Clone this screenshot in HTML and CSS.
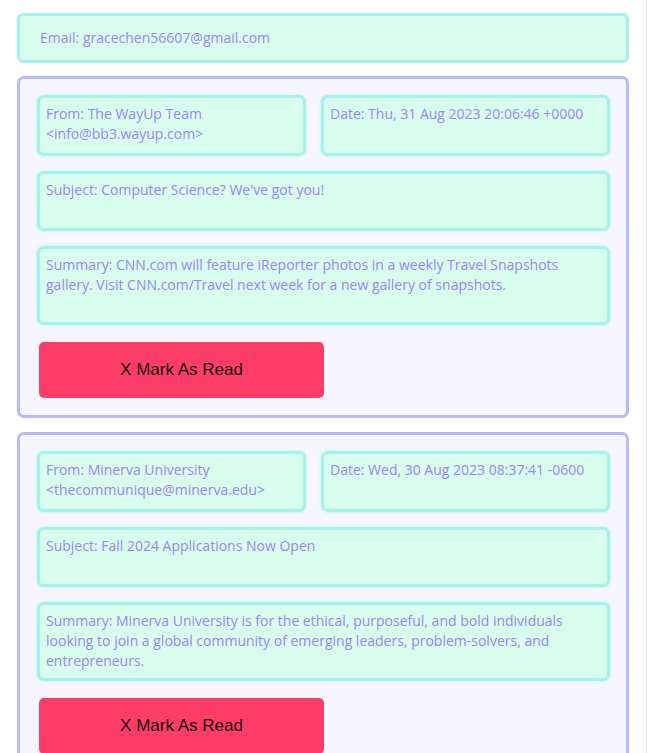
FILE: index.html
```html
<!DOCTYPE html>
<html>
<head>
<meta charset="utf-8">
<link rel="stylesheet" href="styles.css">
</head>
<body>
<div class="page">
  <div class="email-box">Email: gracechen56607@gmail.com</div>

  <div class="card">
    <div class="row">
      <div class="field from">From: The WayUp Team &lt;info@bb3.wayup.com&gt;</div>
      <div class="field date">Date: Thu, 31 Aug 2023 20:06:46 +0000</div>
    </div>
    <div class="field">Subject: Computer Science? We've got you!</div>
    <div class="field summary">Summary: CNN.com will feature iReporter photos in a weekly Travel Snapshots gallery. Visit CNN.com/Travel next week for a new gallery of snapshots.</div>
    <button class="btn">X Mark As Read</button>
  </div>

  <div class="card">
    <div class="row">
      <div class="field from">From: Minerva University &lt;thecommunique@minerva.edu&gt;</div>
      <div class="field date">Date: Wed, 30 Aug 2023 08:37:41 -0600</div>
    </div>
    <div class="field">Subject: Fall 2024 Applications Now Open</div>
    <div class="field summary">Summary: Minerva University is for the ethical, purposeful, and bold individuals looking to join a global community of emerging leaders, problem-solvers, and entrepreneurs.</div>
    <button class="btn">X Mark As Read</button>
  </div>
</div>
</body>
</html>
```

FILE: styles.css
```css
html, body {
  margin: 0;
  padding: 0;
  background: #ffffff;
  overflow: hidden;
}
body {
  font-family: "Open Sans", "Noto Sans", sans-serif;
  font-size: 14px;
  color: #9a85f7;
  border-right: 1px solid #ececec;
  width: 646px;
  height: 753px;
}
.page {
  width: 612px;
  padding: 13px 0 0 17px;
  display: flex;
  flex-direction: column;
  gap: 13px;
}
.email-box {
  box-sizing: border-box;
  height: 50px;
  border: 3px solid #a3f3ea;
  border-radius: 6px;
  background: #d8fdec;
  padding: 0 20px;
  display: flex;
  align-items: center;
  line-height: 20px;
}
.card {
  border: 3px solid #b9b8fb;
  border-radius: 7px;
  background: #f7f6fe;
  padding: 16px 16px 17px 17px;
  display: flex;
  flex-direction: column;
  gap: 15px;
  margin-bottom: 1px;
}
.row {
  display: flex;
  gap: 15px;
}
.row .field {
  min-height: 61px;
}
.from {
  flex: 0 0 269px;
}
.date {
  flex: 1;
}
.field {
  box-sizing: border-box;
  min-height: 60px;
  border: 3px solid #a3f3ea;
  border-radius: 7px;
  background: #d8fdec;
  box-shadow: 0 0 3px #a3f3ea;
  padding: 6px 6px;
  line-height: 20px;
}
.field.summary {
  min-height: 79px;
}
.btn {
  margin: 2px 0 0 2px;
  width: 285px;
  height: 56px;
  border: none;
  border-radius: 5px;
  background: #fd3d68;
  color: #111111;
  font-family: "Liberation Sans", Arial, sans-serif;
  font-size: 17px;
  cursor: pointer;
}
```
